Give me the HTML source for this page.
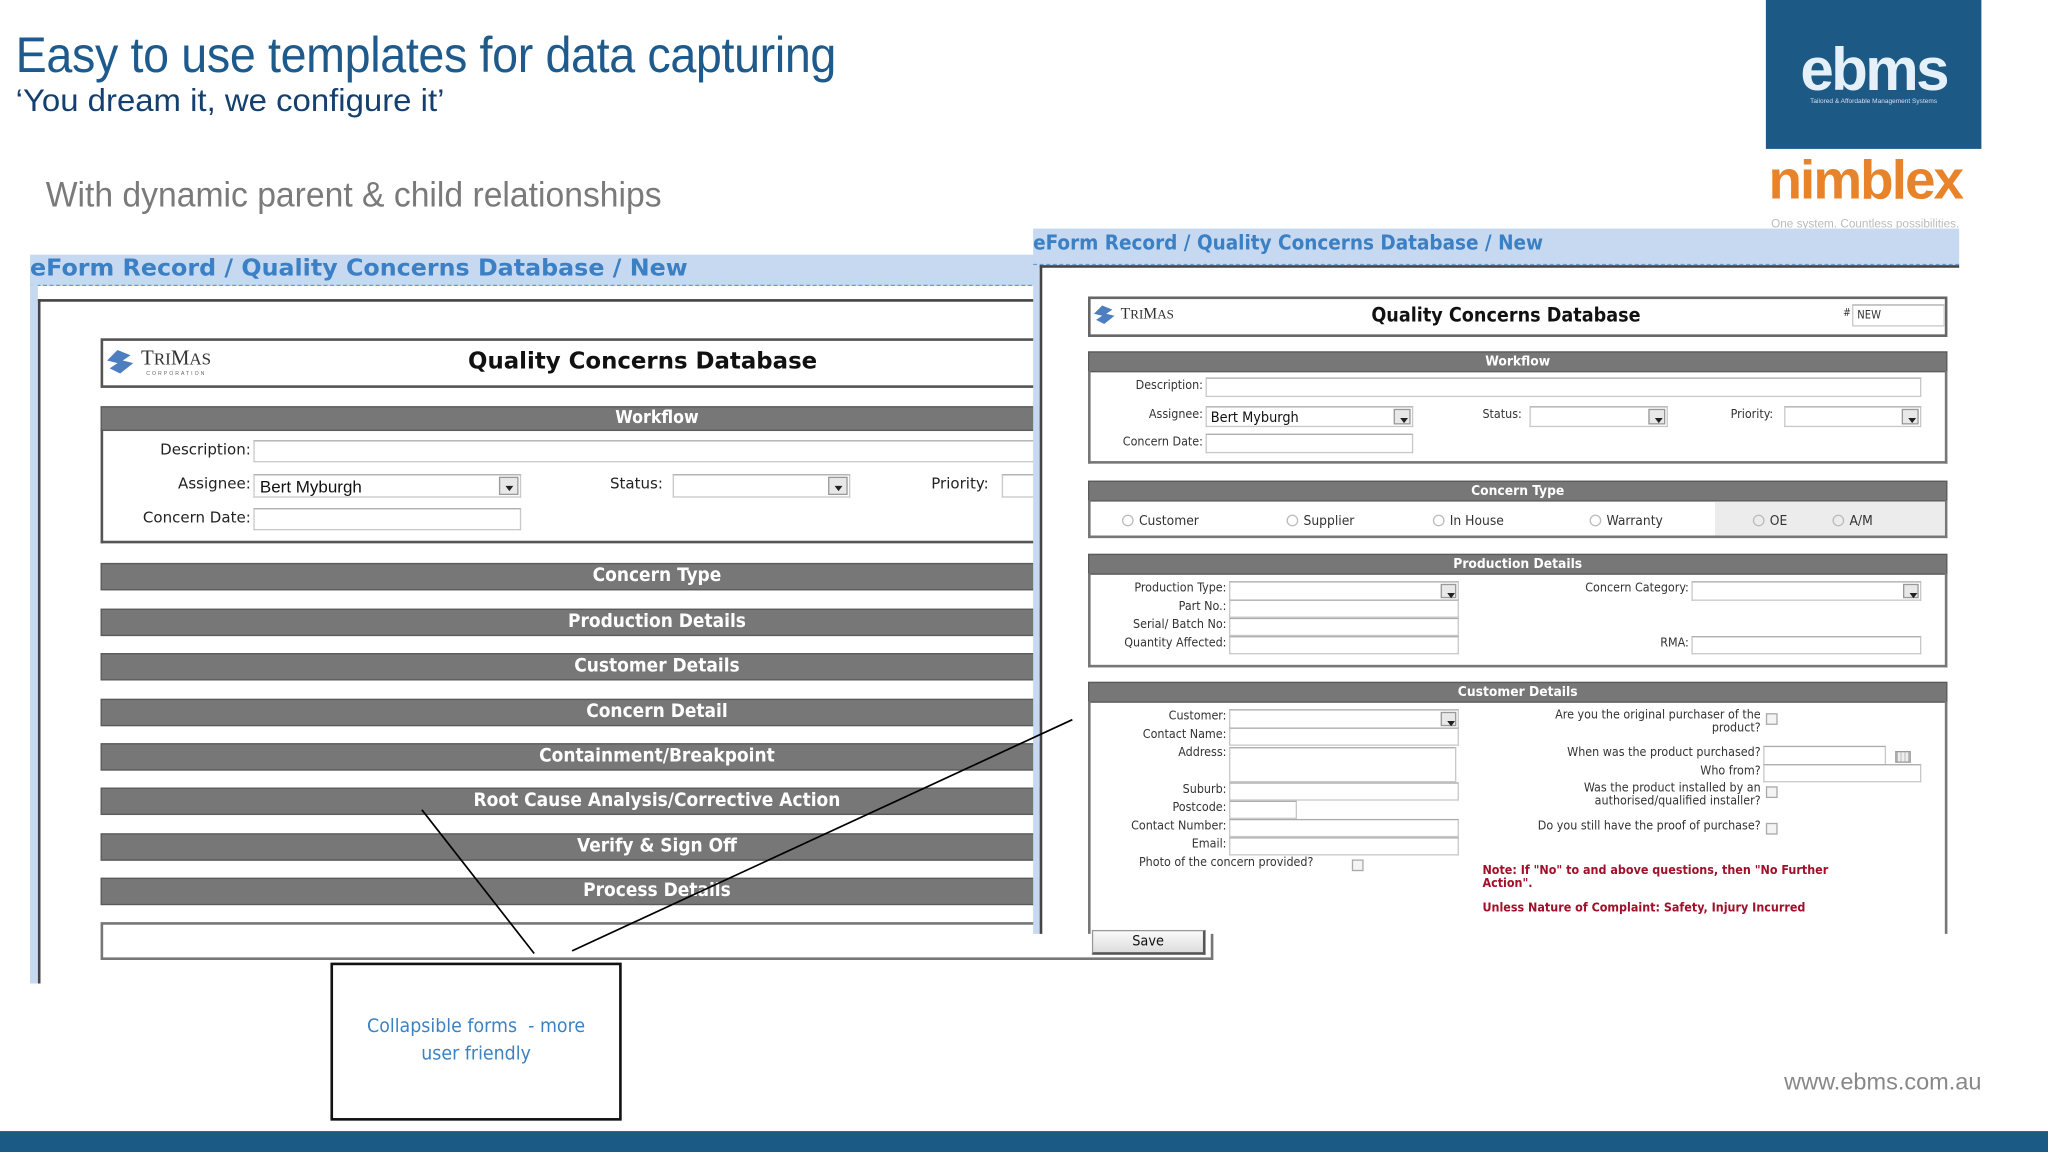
<!DOCTYPE html>
<html><head><meta charset="utf-8"><style>
*{margin:0;padding:0;box-sizing:border-box}
html,body{width:2048px;height:1152px;overflow:hidden;background:#fff}
#s{position:absolute;left:0;top:0;width:1568px;height:882px;transform:scale(1.306122);transform-origin:0 0;font-family:"Liberation Sans",sans-serif}
.a{position:absolute;white-space:nowrap}
.L{font-family:"DejaVu Sans",sans-serif;font-size:11.5px;color:#222}
.R{font-family:"DejaVu Sans Condensed","DejaVu Sans",sans-serif;font-size:9.5px;color:#333}
.lbl{text-align:right}
.inp{background:#fff;border:1px solid #c8c8c8;border-top-color:#aaa}
.bar{background:#777;border:1px solid #5a5a5a;color:#fff;font-weight:bold;text-align:center}
.dd{position:absolute;right:1px;top:1px;bottom:1px;width:15px;background:#e8e8e8;border:1px solid #999}
.dd:after{content:"";position:absolute;left:4px;top:6px;border-left:3px solid transparent;border-right:3px solid transparent;border-top:4px solid #222}
.rad{display:inline-block;width:9px;height:9px;border:1px solid #bbb;border-radius:50%;margin-right:4px;vertical-align:-1px}
.cb{position:absolute;width:9px;height:9px;border:1px solid #aaa;background:#f4f4f4}
.lb{font-family:"DejaVu Sans Condensed","DejaVu Sans",sans-serif;font-size:14.5px}
</style></head><body><div id="s">

<div class="a" style="left:12px;top:22px;font-size:38px;color:#1e5b8c;transform:scaleX(0.94);transform-origin:0 0;letter-spacing:-0.3px">Easy to use templates for data capturing</div>
<div class="a" style="left:12px;top:64px;font-size:24px;color:#153f6e;transform:scaleX(1.05);transform-origin:0 0">‘You dream it, we configure it’</div>
<div class="a" style="left:35px;top:134px;font-size:27px;color:#7a7a7a;transform:scaleX(0.955);transform-origin:0 0">With dynamic parent &amp; child relationships</div>

<div class="a" style="left:1352px;top:0;width:165px;height:114px;background:#1c5a85"></div>
<div class="a" style="left:1352px;top:26px;width:165px;text-align:center;font-size:46px;font-weight:bold;color:#e6f0f8;letter-spacing:-2px">ebms</div>
<div class="a" style="left:1352px;top:75px;width:165px;text-align:center;font-size:5px;color:#dde">Tailored &amp; Affordable Management Systems</div>
<div class="a" style="left:1354px;top:114px;font-size:42px;font-weight:bold;color:#e8832a;letter-spacing:-1.5px">nimblex</div>
<div class="a" style="left:1356px;top:166px;font-size:9px;color:#bbb">One system. Countless possibilities.</div>

<!-- LEFT FORM -->
<div class="a" style="left:23px;top:195px;width:772px;height:24px;background:#c6d9f0;border-bottom:1px dashed #6a9ad0"></div>
<div class="a" style="left:23px;top:218px;width:6px;height:535px;background:#c6d9f0"></div>
<div class="a" style="left:23px;top:196px;font-family:'DejaVu Sans',sans-serif;font-size:17.5px;font-weight:bold;color:#3b7fc4;transform:scaleX(1.04);transform-origin:0 0">eForm Record / Quality Concerns Database / New</div>
<div class="a" style="left:29px;top:229px;width:766px;height:524px;background:#fff;border-top:2px solid #444;border-left:2px solid #444"></div>

<div class="a" style="left:77px;top:259px;width:830px;height:38px;border:2px solid #555;background:#fff"></div>
<svg class="a" style="left:80px;top:266px" width="28" height="22" viewBox="0 0 28 22"><path d="M2 10 L10 2 L20 6 L14 10 L22 12 L12 20 L4 16 L10 12 Z" fill="#4d7fc0"/></svg>
<div class="a" style="left:108px;top:266px;font-family:'Liberation Serif',serif;font-size:16px;color:#333">T<span style="font-size:13px">RI</span>M<span style="font-size:13px">AS</span></div>
<div class="a" style="left:112px;top:283px;font-size:4px;color:#666;letter-spacing:1.5px">CORPORATION</div>
<div class="a L" style="left:292px;top:267px;width:400px;text-align:center;font-size:17.5px;font-weight:bold;color:#111">Quality Concerns Database</div>

<div class="a bar lb" style="left:77px;top:311px;width:852px;height:19px;line-height:17px;font-size:13.5px">Workflow</div>
<div class="a" style="left:77px;top:329px;width:852px;height:87px;border:2px solid #555;border-top:none"></div>
<div class="a L lbl" style="left:80px;top:337px;width:112px">Description:</div>
<div class="a inp" style="left:194px;top:337px;width:700px;height:17px"></div>
<div class="a L lbl" style="left:80px;top:363px;width:112px">Assignee:</div>
<div class="a inp" style="left:194px;top:363px;width:205px;height:18px"><span class="a" style="left:4px;top:1px;font-size:13px;color:#111;font-family:'Liberation Sans',sans-serif">Bert Myburgh</span><span class="dd"></span></div>
<div class="a L" style="left:467px;top:363px">Status:</div>
<div class="a inp" style="left:515px;top:363px;width:136px;height:18px"><span class="dd"></span></div>
<div class="a L" style="left:713px;top:363px">Priority:</div>
<div class="a inp" style="left:767px;top:363px;width:100px;height:18px"></div>
<div class="a L lbl" style="left:80px;top:389px;width:112px">Concern Date:</div>
<div class="a inp" style="left:194px;top:389px;width:205px;height:17px"></div>

<div class="a bar lb" style="left:77px;top:431px;width:852px;height:21px;line-height:19px">Concern Type</div>
<div class="a bar lb" style="left:77px;top:466px;width:852px;height:21px;line-height:19px">Production Details</div>
<div class="a bar lb" style="left:77px;top:500px;width:852px;height:21px;line-height:19px">Customer Details</div>
<div class="a bar lb" style="left:77px;top:535px;width:852px;height:21px;line-height:19px">Concern Detail</div>
<div class="a bar lb" style="left:77px;top:569px;width:852px;height:21px;line-height:19px">Containment/Breakpoint</div>
<div class="a bar lb" style="left:77px;top:603px;width:852px;height:21px;line-height:19px">Root Cause Analysis/Corrective Action</div>
<div class="a bar lb" style="left:77px;top:638px;width:852px;height:21px;line-height:19px">Verify &amp; Sign Off</div>
<div class="a bar lb" style="left:77px;top:672px;width:852px;height:21px;line-height:19px">Process Details</div>
<div class="a" style="left:77px;top:706px;width:852px;height:29px;border:2px solid #777;background:#fff"></div>

<!-- RIGHT FORM -->
<div class="a" style="left:791px;top:175px;width:709px;height:28px;background:#c6d9f0;border-bottom:1px dashed #6a9ad0"></div>
<div class="a" style="left:791px;top:176px;font-family:'DejaVu Sans Condensed','DejaVu Sans',sans-serif;font-size:15.7px;font-weight:bold;color:#3b7fc4">eForm Record / Quality Concerns Database / New</div>
<div class="a" style="left:791px;top:203px;width:5px;height:512px;background:#c6d9f0"></div>
<div class="a" style="left:796px;top:203px;width:704px;height:512px;background:#fff;border-top:2px solid #444;border-left:2px solid #444"></div>

<div class="a" style="left:833px;top:227px;width:658px;height:31px;border:2px solid #666;background:#fff"></div>
<svg class="a" style="left:836px;top:232px" width="22" height="18" viewBox="0 0 28 22"><path d="M2 10 L10 2 L20 6 L14 10 L22 12 L12 20 L4 16 L10 12 Z" fill="#4d7fc0"/></svg>
<div class="a" style="left:858px;top:233px;font-family:'Liberation Serif',serif;font-size:12px;color:#333">T<span style="font-size:10px">RI</span>M<span style="font-size:10px">AS</span></div>
<div class="a R" style="left:1000px;top:232px;width:306px;text-align:center;font-size:15px;font-weight:bold;color:#111">Quality Concerns Database</div>
<div class="a R" style="left:1411px;top:235px;font-size:8px">#</div>
<div class="a inp" style="left:1418px;top:233px;width:71px;height:17px"><span class="a R" style="left:3px;top:3px;font-size:8.5px">NEW</span></div>

<div class="a bar R" style="left:833px;top:269px;width:658px;height:16px;line-height:14px;font-size:10.5px">Workflow</div>
<div class="a" style="left:833px;top:284px;width:658px;height:71px;border:2px solid #777;border-top:none"></div>
<div class="a R lbl" style="left:835px;top:290px;width:86px">Description:</div>
<div class="a inp" style="left:923px;top:289px;width:548px;height:15px"></div>
<div class="a R lbl" style="left:835px;top:312px;width:86px">Assignee:</div>
<div class="a inp" style="left:923px;top:311px;width:159px;height:16px"><span class="a" style="left:3px;top:1px;font-size:11px;color:#111;font-family:'DejaVu Sans Condensed',sans-serif">Bert Myburgh</span><span class="dd" style="width:13px"></span></div>
<div class="a R" style="left:1135px;top:312px">Status:</div>
<div class="a inp" style="left:1171px;top:311px;width:106px;height:16px"><span class="dd" style="width:13px"></span></div>
<div class="a R" style="left:1325px;top:312px">Priority:</div>
<div class="a inp" style="left:1366px;top:311px;width:105px;height:16px"><span class="dd" style="width:13px"></span></div>
<div class="a R lbl" style="left:835px;top:333px;width:86px">Concern Date:</div>
<div class="a inp" style="left:923px;top:332px;width:159px;height:15px"></div>

<div class="a bar R" style="left:833px;top:368px;width:658px;height:16px;line-height:14px;font-size:10.5px">Concern Type</div>
<div class="a" style="left:833px;top:383px;width:658px;height:29px;border:2px solid #777;border-top:none"></div>
<div class="a" style="left:1313px;top:384px;width:176px;height:26px;background:#ececec"></div>
<div class="a R" style="left:859px;top:393px;font-size:10.5px"><span class="rad"></span>Customer</div>
<div class="a R" style="left:985px;top:393px;font-size:10.5px"><span class="rad"></span>Supplier</div>
<div class="a R" style="left:1097px;top:393px;font-size:10.5px"><span class="rad"></span>In House</div>
<div class="a R" style="left:1217px;top:393px;font-size:10.5px"><span class="rad"></span>Warranty</div>
<div class="a R" style="left:1342px;top:393px;font-size:10.5px"><span class="rad"></span>OE</div>
<div class="a R" style="left:1403px;top:393px;font-size:10.5px"><span class="rad"></span>A/M</div>

<div class="a bar R" style="left:833px;top:424px;width:658px;height:16px;line-height:14px;font-size:10.5px">Production Details</div>
<div class="a" style="left:833px;top:439px;width:658px;height:72px;border:2px solid #777;border-top:none"></div>
<div class="a R lbl" style="left:835px;top:445px;width:104px">Production Type:</div>
<div class="a inp" style="left:941px;top:445px;width:176px;height:15px"><span class="dd" style="width:12px"></span></div>
<div class="a R lbl" style="left:835px;top:459px;width:104px">Part No.:</div>
<div class="a inp" style="left:941px;top:459px;width:176px;height:14px"></div>
<div class="a R lbl" style="left:835px;top:473px;width:104px">Serial/ Batch No:</div>
<div class="a inp" style="left:941px;top:473px;width:176px;height:14px"></div>
<div class="a R lbl" style="left:835px;top:487px;width:104px">Quantity Affected:</div>
<div class="a inp" style="left:941px;top:487px;width:176px;height:14px"></div>
<div class="a R lbl" style="left:1150px;top:445px;width:143px">Concern Category:</div>
<div class="a inp" style="left:1295px;top:445px;width:176px;height:15px"><span class="dd" style="width:12px"></span></div>
<div class="a R lbl" style="left:1150px;top:487px;width:143px">RMA:</div>
<div class="a inp" style="left:1295px;top:487px;width:176px;height:14px"></div>

<div class="a bar R" style="left:833px;top:522px;width:658px;height:16px;line-height:14px;font-size:10.5px">Customer Details</div>
<div class="a" style="left:833px;top:537px;width:658px;height:178px;border-left:2px solid #777;border-right:2px solid #777"></div>
<div class="a R lbl" style="left:835px;top:543px;width:104px">Customer:</div>
<div class="a inp" style="left:941px;top:543px;width:176px;height:15px"><span class="dd" style="width:12px"></span></div>
<div class="a R lbl" style="left:835px;top:557px;width:104px">Contact Name:</div>
<div class="a inp" style="left:941px;top:557px;width:176px;height:14px"></div>
<div class="a R lbl" style="left:835px;top:571px;width:104px">Address:</div>
<div class="a inp" style="left:941px;top:572px;width:174px;height:27px"></div>
<div class="a R lbl" style="left:835px;top:599px;width:104px">Suburb:</div>
<div class="a inp" style="left:941px;top:599px;width:176px;height:14px"></div>
<div class="a R lbl" style="left:835px;top:613px;width:104px">Postcode:</div>
<div class="a inp" style="left:941px;top:613px;width:52px;height:14px"></div>
<div class="a R lbl" style="left:835px;top:627px;width:104px">Contact Number:</div>
<div class="a inp" style="left:941px;top:627px;width:176px;height:14px"></div>
<div class="a R lbl" style="left:835px;top:641px;width:104px">Email:</div>
<div class="a inp" style="left:941px;top:641px;width:176px;height:14px"></div>
<div class="a R" style="left:872px;top:655px">Photo of the concern provided?</div>
<div class="cb" style="left:1035px;top:658px"></div>

<div class="a R lbl" style="left:1100px;top:543px;width:248px;line-height:10px">Are you the original purchaser of the<br>product?</div>
<div class="cb" style="left:1352px;top:546px"></div>
<div class="a R lbl" style="left:1100px;top:571px;width:248px">When was the product purchased?</div>
<div class="a inp" style="left:1350px;top:571px;width:94px;height:15px"></div>
<div class="a" style="left:1451px;top:575px;width:12px;height:9px;border:1px solid #999;background:repeating-linear-gradient(90deg,#bbb 0 1px,#eee 1px 3px)"></div>
<div class="a R lbl" style="left:1100px;top:585px;width:248px">Who from?</div>
<div class="a inp" style="left:1350px;top:585px;width:121px;height:14px"></div>
<div class="a R lbl" style="left:1100px;top:599px;width:248px;line-height:10px">Was the product installed by an<br>authorised/qualified installer?</div>
<div class="cb" style="left:1352px;top:602px"></div>
<div class="a R lbl" style="left:1100px;top:627px;width:248px">Do you still have the proof of purchase?</div>
<div class="cb" style="left:1352px;top:630px"></div>
<div class="a R" style="left:1135px;top:662px;font-weight:bold;color:#a0102a;line-height:10px;font-size:9.5px">Note: If "No" to and above questions, then "No Further<br>Action".</div>
<div class="a R" style="left:1135px;top:690px;font-weight:bold;color:#a0102a;font-size:9.5px">Unless Nature of Complaint: Safety, Injury Incurred</div>

<div class="a R" style="left:836px;top:712px;width:87px;height:19px;background:linear-gradient(#fafafa,#ddd);border:1px solid #999;border-right:2px solid #555;border-bottom:2px solid #555;text-align:center;font-size:11px;line-height:15px;color:#111">Save</div>

<svg class="a" style="left:0;top:0" width="1568" height="882"><line x1="323" y1="620" x2="409" y2="730" stroke="#000" stroke-width="1.3"/><line x1="438" y1="728" x2="821" y2="551" stroke="#000" stroke-width="1.3"/></svg>

<div class="a" style="left:253px;top:737px;width:223px;height:121px;border:2px solid #111;background:#fff"></div>
<div class="a" style="left:253px;top:776px;width:223px;text-align:center;font-family:'DejaVu Sans',sans-serif;font-size:14.5px;line-height:21px;color:#3b82c4;white-space:normal;transform:scaleX(0.92)">Collapsible forms &nbsp;- more<br>user friendly</div>

<div class="a" style="left:1366px;top:818px;font-size:18px;color:#888">www.ebms.com.au</div>
<div class="a" style="left:0;top:866px;width:1568px;height:16px;background:#1a5a85"></div>
</div></body></html>
